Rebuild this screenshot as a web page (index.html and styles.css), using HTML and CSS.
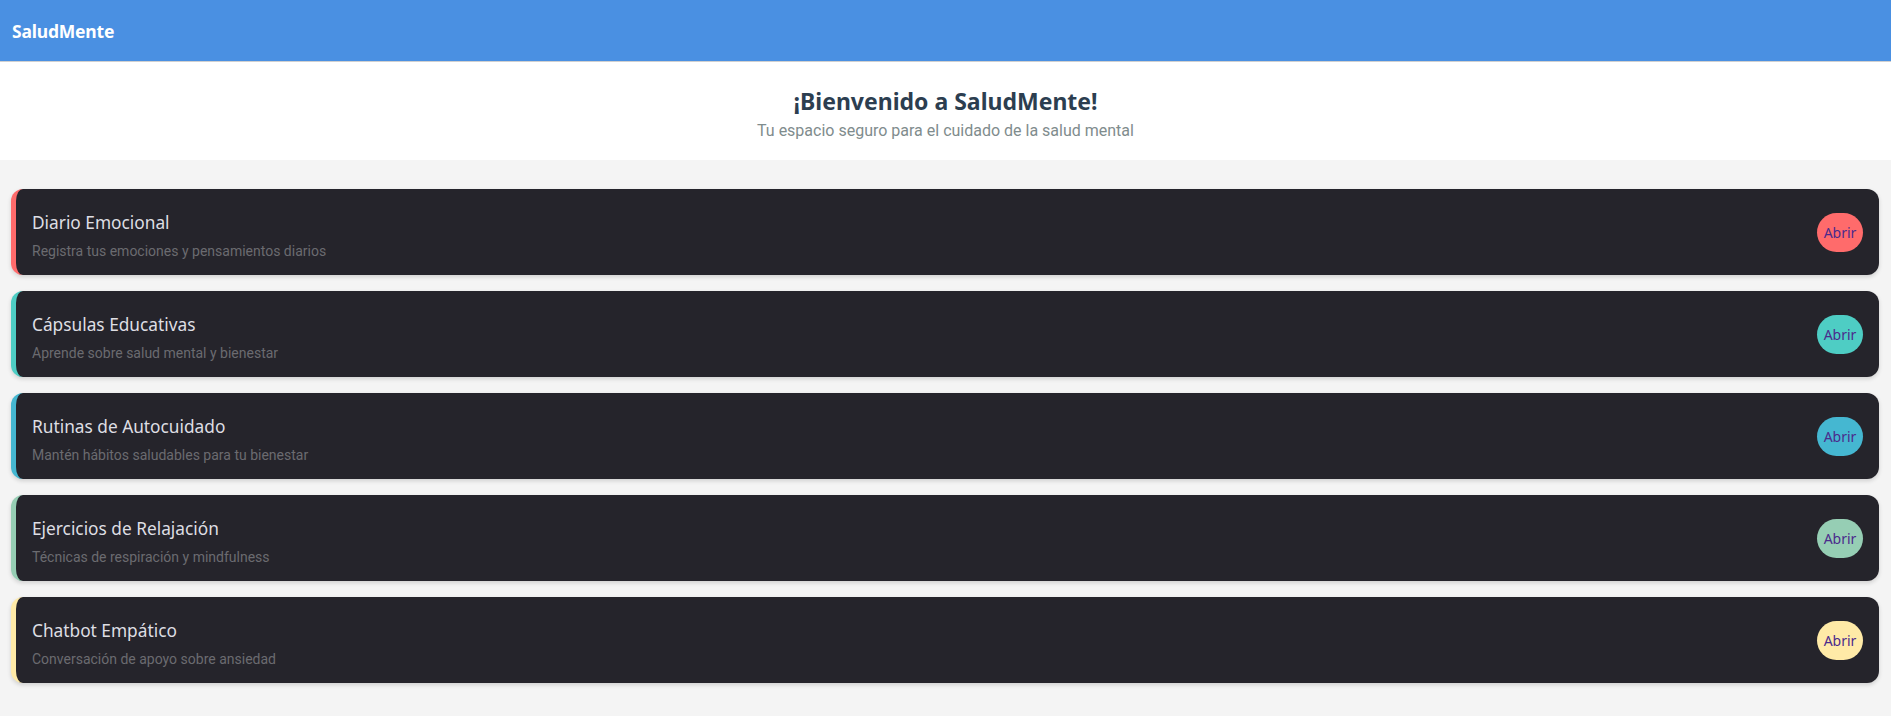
FILE: index.html
```html
<!DOCTYPE html>
<html lang="es">
<head>
<meta charset="utf-8">
<title>SaludMente</title>
<link rel="stylesheet" href="styles.css">
</head>
<body>
<header class="topbar">
  <div class="brand">SaludMente</div>
</header>
<section class="hero">
  <h1 class="hero-title">¡Bienvenido a SaludMente!</h1>
  <p class="hero-sub">Tu espacio seguro para el cuidado de la salud mental</p>
</section>
<main class="list">
  <div class="card c-red">
    <div class="card-text">
      <h2 class="card-title">Diario Emocional</h2>
      <p class="card-desc">Registra tus emociones y pensamientos diarios</p>
    </div>
    <button class="btn">Abrir</button>
  </div>
  <div class="card c-teal">
    <div class="card-text">
      <h2 class="card-title">Cápsulas Educativas</h2>
      <p class="card-desc">Aprende sobre salud mental y bienestar</p>
    </div>
    <button class="btn">Abrir</button>
  </div>
  <div class="card c-blue">
    <div class="card-text">
      <h2 class="card-title">Rutinas de Autocuidado</h2>
      <p class="card-desc">Mantén hábitos saludables para tu bienestar</p>
    </div>
    <button class="btn">Abrir</button>
  </div>
  <div class="card c-green">
    <div class="card-text">
      <h2 class="card-title">Ejercicios de Relajación</h2>
      <p class="card-desc">Técnicas de respiración y mindfulness</p>
    </div>
    <button class="btn">Abrir</button>
  </div>
  <div class="card c-yellow">
    <div class="card-text">
      <h2 class="card-title">Chatbot Empático</h2>
      <p class="card-desc">Conversación de apoyo sobre ansiedad</p>
    </div>
    <button class="btn">Abrir</button>
  </div>
</main>
</body>
</html>
```
FILE: styles.css
```css
* { box-sizing: border-box; }
html, body { margin: 0; padding: 0; }
body {
  background: #f4f4f4;
  font-family: "Noto Sans", "Open Sans", sans-serif;
}
.topbar {
  height: 62px;
  background: #4a90e2;
  display: flex;
  align-items: center;
  padding: 0 12px;
  border-bottom: 1px solid #d0d0d0;
}
.brand {
  color: #fff;
  font-weight: 700;
  font-size: 17.5px;
  letter-spacing: -0.2px;
}
.hero {
  background: #fff;
  height: 98px;
  display: flex;
  flex-direction: column;
  align-items: center;
  justify-content: center;
  padding-top: 5px;
}
.hero-title {
  margin: 0;
  font-size: 23px;
  font-weight: 700;
  color: #2c3e50;
  line-height: 30px;
}
.hero-sub {
  margin: 5px 0 0;
  font-family: Roboto, sans-serif;
  font-size: 16px;
  color: #7f8c8d;
  line-height: 20px;
}
.list {
  padding: 29px 12px 20px 11px;
  display: flex;
  flex-direction: column;
  gap: 16px;
}
.card {
  height: 86px;
  background: #25242b;
  border-radius: 12px;
  border-left: 5px solid #ff6b6b;
  display: flex;
  align-items: center;
  justify-content: space-between;
  padding: 0 16px 0 16px;
  box-shadow: 0 2px 4px rgba(0,0,0,0.15);
}
.c-red { border-left-color: #ff6b6b; }
.c-teal { border-left-color: #4ecdc4; }
.c-blue { border-left-color: #45b7d1; }
.c-green { border-left-color: #96ceb4; }
.c-yellow { border-left-color: #ffeaa7; }
.c-red .btn { background: #ff6b6b; }
.c-teal .btn { background: #4ecdc4; }
.c-blue .btn { background: #45b7d1; }
.c-green .btn { background: #96ceb4; }
.c-yellow .btn { background: #ffeaa7; }
.card-text { display: flex; flex-direction: column; padding-top: 7px; }
.card-title {
  margin: 0;
  font-size: 17.3px;
  font-weight: 400;
  color: #dedee3;
  line-height: 24px;
}
.card-desc {
  margin: 7px 0 0;
  font-family: Roboto, sans-serif;
  font-size: 14px;
  color: #6b6b70;
  line-height: 18px;
}
.btn {
  border: none;
  border-radius: 20px;
  width: 46px;
  height: 39px;
  padding: 0;
  font-family: "Noto Sans", "Open Sans", sans-serif;
  font-size: 14px;
  color: #4b2a8c;
  cursor: pointer;
}
```
